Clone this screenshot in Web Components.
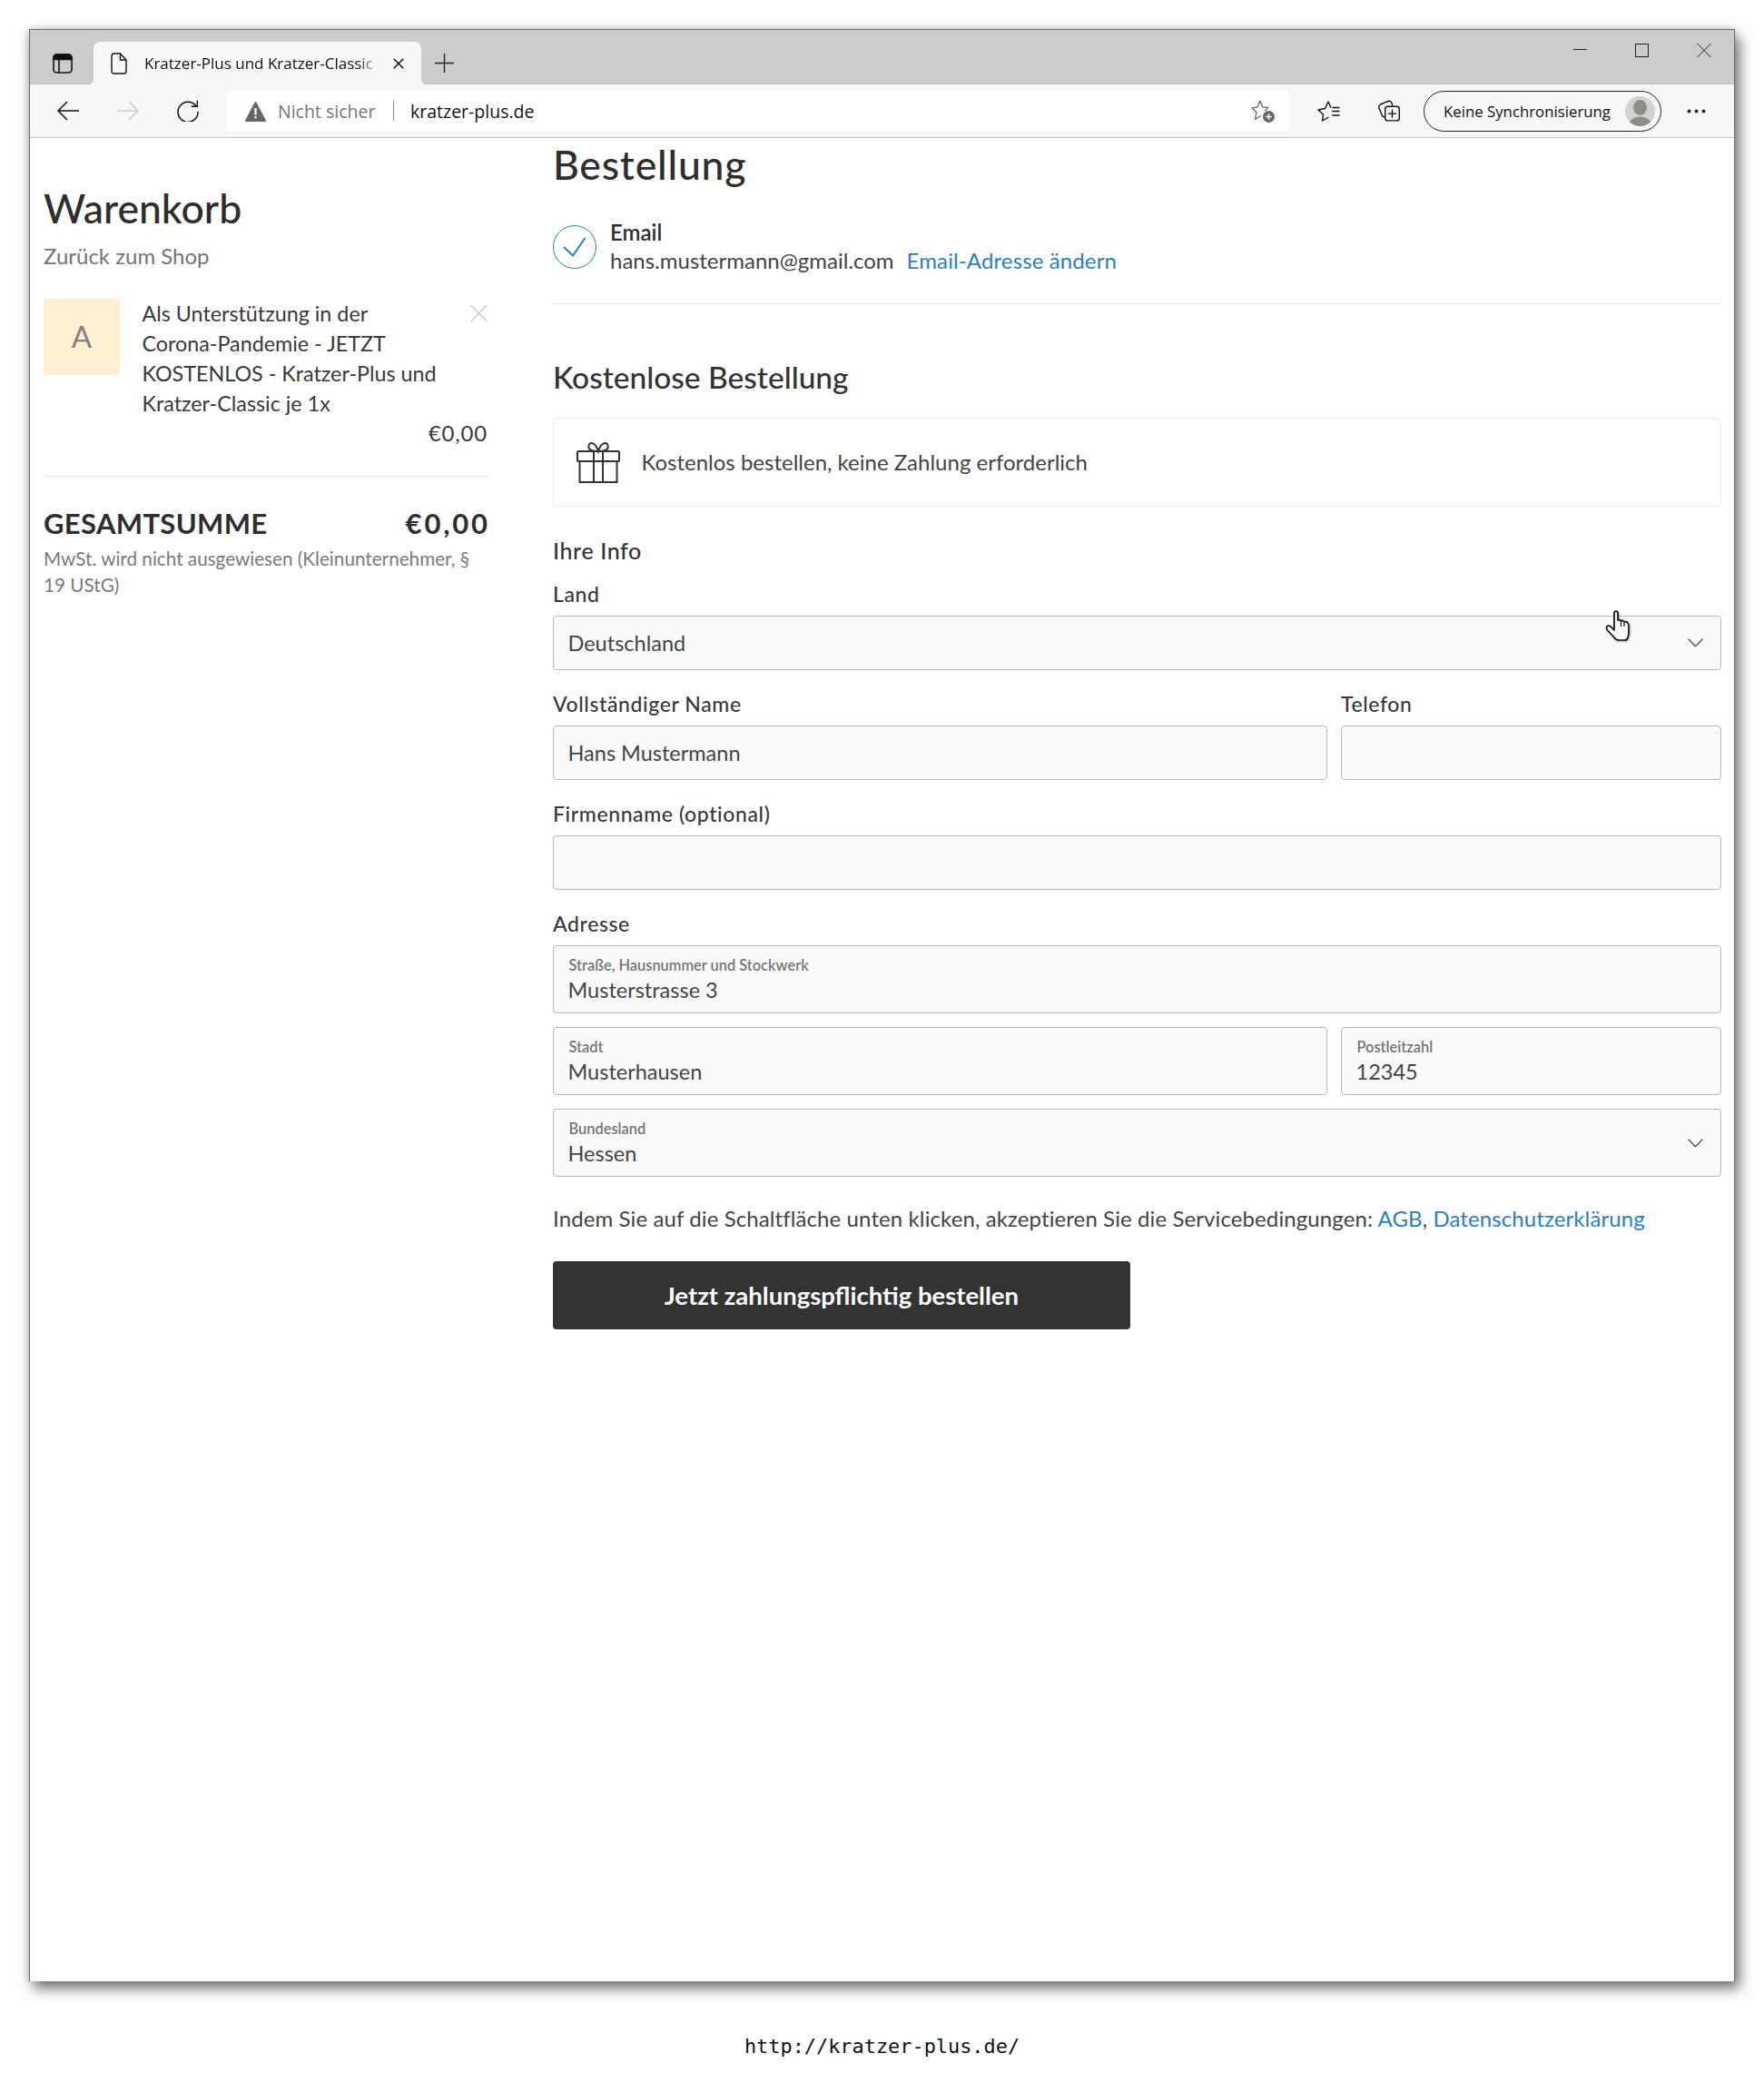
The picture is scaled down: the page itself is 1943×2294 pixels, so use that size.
<!doctype html>
<html lang="de">
<head>
<meta charset="utf-8">
<title>Kratzer-Plus</title>
<style>
  html, body { margin: 0; background: #fff; }
  body { font-family: Lato, "Liberation Sans", sans-serif; color: #333; }
</style>
</head>
<body>
<shot-page>
  <browser-window>
    <tab-strip slot="tabs" title-text="Kratzer-Plus und Kratzer-Classic"></tab-strip>
    <nav-toolbar slot="toolbar"></nav-toolbar>
    <cart-sidebar></cart-sidebar>
    <checkout-form></checkout-form>
    <hand-cursor></hand-cursor>
  </browser-window>
  <span slot="caption">http://kratzer-plus.de/</span>
</shot-page>

<script>
const shadow = (el, html) => {
  el.attachShadow({ mode: 'open' }).innerHTML = html
}

customElements.define('shot-page', class extends HTMLElement {
  constructor() {
    super()
    shadow(this, `
      <style>
        :host { display: block; padding: 32px 32px 0; height: 2262px; overflow: hidden; }
        .caption {
          margin-top: 57px; text-align: center; color: #111;
          font: 21.9px/30px "DejaVu Sans Mono", monospace;
        }
      </style>
      <slot></slot>
      <div class="caption"><slot name="caption"></slot></div>
    `)
  }
})

customElements.define('browser-window', class extends HTMLElement {
  constructor() {
    super()
    shadow(this, `
      <style>
        :host {
          display: block; width: 1877px; height: 2149px; background: #fff;
          border: 1px solid #6a6a6a; border-width: 1px 1px 0 1px;
          box-shadow: 5px 8px 14px rgba(0,0,0,.55), -2px -1px 8px rgba(0,0,0,.16);
        }
        .view {
          position: relative; display: grid; grid-template-columns: 489px 1fr;
          column-gap: 72px; padding: 0 14px 0 15px;
        }
      </style>
      <slot name="tabs"></slot>
      <slot name="toolbar"></slot>
      <div class="view"><slot></slot></div>
    `)
  }
})

customElements.define('tab-strip', class extends HTMLElement {
  constructor() {
    super()
    shadow(this, `
      <style>
        :host { display: flex; height: 60px; background: #ccc; box-shadow: inset 0 -1px 0 #c4c4c4; }
        .side { margin: 26px 0 0 25px; width: 22px; height: 22px; }
        .tab {
          position: relative; display: flex; align-items: center; margin: 13px 0 0 23px;
          width: 361px; height: 47px; box-sizing: border-box; padding: 0 19px;
          background: #f7f7f7; border-radius: 7px 7px 0 0;
        }
        .tab::before, .tab::after {
          content: ''; position: absolute; bottom: 0; width: 6px; height: 6px;
        }
        .tab::before { left: -6px; background: radial-gradient(circle at 0 0, transparent 6px, #f7f7f7 6.5px); }
        .tab::after { right: -6px; background: radial-gradient(circle at 100% 0, transparent 6px, #f7f7f7 6.5px); }
        .label {
          margin-left: 19px; width: 260px; white-space: nowrap; overflow: hidden;
          font: 17px/24px "Open Sans", sans-serif; color: #111;
          -webkit-mask-image: linear-gradient(90deg, #000 235px, transparent 260px);
          mask-image: linear-gradient(90deg, #000 235px, transparent 260px);
        }
        .close { margin-left: 14px; }
        .plus { margin: 26px 0 0 15px; }
        .win { margin-left: auto; display: flex; align-items: flex-start; padding: 15px 25px 0 0; }
        .win svg { display: block; }
        .win svg + svg { margin-left: 53px; }
        svg { flex: none; }
      </style>
      <svg class="side" viewBox="0 0 22 22" fill="none" stroke="#111" stroke-width="1.6">
        <rect x="1" y="1" width="20" height="20" rx="3.5"/>
        <path d="M1 6.5V4.5A3.5 3.5 0 0 1 4.5 1h13A3.5 3.5 0 0 1 21 4.5v2z" fill="#111"/>
        <path d="M7 7v14"/>
      </svg>
      <div class="tab">
        <svg width="18" height="24" viewBox="0 0 18 24" fill="none" stroke="#111" stroke-width="1.4" stroke-linejoin="round">
          <path d="M3.5 1H10.500L17 8V20.500A2.500 2.500 0 0 1 14.500 23H3.500A2.500 2.500 0 0 1 1 20.500V3.500A2.500 2.500 0 0 1 3.500 1z"/>
          <path d="M10.500 1V8H17"/>
        </svg>
        <div class="label">${this.getAttribute('title-text') || ''}</div>
        <svg class="close" width="12" height="12" viewBox="0 0 12 12" stroke="#111" stroke-width="1.500"><path d="M.7.7l10.600 10.600M11.300.7L.7 11.300"/></svg>
      </div>
      <svg class="plus" width="21" height="21" viewBox="0 0 21 21" stroke="#222" stroke-width="1.400"><path d="M10.500 0v21M0 10.500h21"/></svg>
      <div class="win">
        <svg width="15" height="15" viewBox="0 0 15 15" stroke="#222" stroke-width="1"><path d="M0 6.500h15"/></svg>
        <svg width="15" height="15" viewBox="0 0 15 15" fill="none" stroke="#222" stroke-width="1"><rect x=".5" y=".5" width="14" height="14"/></svg>
        <svg width="16" height="15" viewBox="0 0 16 15" stroke="#222" stroke-width="1"><path d="M.5 0l15 15M15.500 0L.5 15"/></svg>
      </div>
    `)
  }
})

customElements.define('nav-toolbar', class extends HTMLElement {
  constructor() {
    super()
    shadow(this, `
      <style>
        :host {
          display: flex; align-items: center; height: 58px; background: #f7f7f7;
          border-bottom: 1px solid #c2c2c2; padding-left: 30px;
          font-family: "Open Sans", sans-serif;
        }
        svg { flex: none; display: block; }
        .fwd { margin-left: 42px; }
        .reload { margin-left: 42px; }
        .addr {
          display: flex; align-items: center; margin-left: 30px; width: 1171px; height: 45px;
          box-sizing: border-box; padding: 0 15px 0 21px; background: #fff; border-radius: 5px;
          font-size: 19.500px;
        }
        .warn { margin-right: 13px; }
        .unsafe { color: #767676; width: 109px; white-space: nowrap; }
        .sep { margin: 0 18px; width: 1px; height: 22px; background: #8a8a8a; }
        .host { color: #111; white-space: nowrap; }
        .star { margin-left: auto; }
        .fav { margin-left: 31px; }
        .coll { margin-left: 41px; }
        .pill {
          display: flex; align-items: center; margin-left: 26px; width: 262px; height: 45px;
          box-sizing: border-box; border: 1.500px solid #222; border-radius: 23px;
          padding: 0 6px 0 21px; font-size: 16.800px; color: #111; white-space: nowrap;
        }
        .avatar { margin-left: auto; }
        .dots { margin-left: 28px; }
      </style>
      <svg width="24" height="22" viewBox="0 0 24 22" fill="none" stroke="#111" stroke-width="1.500"><path d="M24 11H1M11 1L1 11l10 10"/></svg>
      <svg class="fwd" width="24" height="22" viewBox="0 0 24 22" fill="none" stroke="#ccc" stroke-width="1.500"><path d="M0 11h23M13 1l10 10-10 10"/></svg>
      <svg class="reload" width="24" height="24" viewBox="0 0 24 24" fill="none" stroke="#111" stroke-width="1.500"><path d="M21 7A11 11 0 1 0 23 13"/><path d="M22.300 .8V7.300H15.800"/></svg>
      <div class="addr">
        <svg class="warn" width="23" height="23" viewBox="0 0 23 23">
          <path fill="#666" stroke="#666" stroke-width="2" stroke-linejoin="round" d="M11.500 2L22 22H1z"/>
          <path fill="#fff" d="M10.400 8h2.200v7.500h-2.200zM10.400 17h2.200v2.300h-2.200z"/>
        </svg>
        <span class="unsafe">Nicht sicher</span>
        <span class="sep"></span>
        <span class="host">kratzer-plus.de</span>
        <svg class="star" width="27" height="25" viewBox="0 0 27 25" fill="none" stroke="#666" stroke-width="1.300" stroke-linejoin="round">
          <path d="M11 17.500L4.500 21.500L6 13.800L1 8.800L7.200 7.800L9.800 1L12.600 7.800L18.800 8.400L15.200 12"/>
          <circle cx="19.500" cy="18.500" r="6.500" fill="#666" stroke="none"/>
          <path d="M19.500 15.200v6.600M16.200 18.500h6.600" stroke="#fff" stroke-width="1.500"/>
        </svg>
      </div>
      <svg class="fav" width="25" height="23" viewBox="0 0 25 23" fill="none" stroke="#111" stroke-width="1.400" stroke-linejoin="round">
        <path d="M15 7.500L12 1L8.500 8.500L1 10L6.500 15L5.500 22L12.500 18"/>
        <path d="M16.300 7.500h8.200M16.300 11.500h8.200M16.300 16h8.200" stroke-width="1.300"/>
      </svg>
      <svg class="coll" width="25" height="24" viewBox="0 0 25 24" fill="none" stroke="#111" stroke-width="1.400">
        <path d="M8.500 19A4 4 0 0 1 5.500 17.500L2 9A3.500 3.500 0 0 1 3.500 5L12 1.500A3 3 0 0 1 15.500 2.500L17 6.500"/>
        <rect x="8.700" y="7.300" width="15.600" height="15.600" rx="3"/>
        <path d="M16.500 10.500v9.200M11.900 15.100h9.200"/>
      </svg>
      <div class="pill">
        <span>Keine Synchronisierung</span>
        <svg class="avatar" width="33" height="33" viewBox="0 0 33 33">
          <clipPath id="c"><circle cx="16.500" cy="16.500" r="16.500"/></clipPath>
          <circle cx="16.500" cy="16.500" r="16.500" fill="#d3d2cc"/>
          <g clip-path="url(#c)" fill="#8f8c88">
            <ellipse cx="16.500" cy="12.500" rx="7.500" ry="8.500"/>
            <ellipse cx="16.500" cy="31" rx="12" ry="8.500"/>
          </g>
        </svg>
      </div>
      <svg class="dots" width="21" height="5" viewBox="0 0 21 5" fill="#222"><circle cx="2.500" cy="2.500" r="2"/><circle cx="10.500" cy="2.500" r="2"/><circle cx="18.500" cy="2.500" r="2"/></svg>
    `)
  }
})

customElements.define('cart-sidebar', class extends HTMLElement {
  constructor() {
    super()
    shadow(this, `
      <style>
        :host { display: block; padding-top: 50px; color: #333; font-family: Lato, sans-serif; }
        h1 { margin: 0; font: 500 44.500px/54px Lato, sans-serif; color: #2e2e2e; }
        .back { margin-top: 11px; font-size: 24px; line-height: 30px; color: #757575; }
        .item { display: flex; margin-top: 31px; }
        .thumb {
          flex: none; display: flex; align-items: center; justify-content: center;
          width: 84px; height: 82px; padding-bottom: 2px; margin-top: 1px; background: #fff0d3;
          font-size: 33px; color: #808080;
        }
        .desc { margin: 1px 0 -1px 24.500px; font-size: 23.300px; line-height: 33px; color: #3a3a3a; white-space: nowrap; }
        .x { margin: 8px 0 0 auto; flex: none; }
        .price { font-size: 24px; line-height: 33px; text-align: right; color: #3a3a3a; letter-spacing: .8px; }
        hr { margin: 31px 0 32px; border: 0; border-top: 1px solid #e6e6e6; }
        .total {
          display: flex; justify-content: space-between;
          font: 700 31px/38px Lato, sans-serif; color: #2e2e2e; letter-spacing: .35px;
        }
        .sum { letter-spacing: 2.800px; margin-right: -2.800px; }
        .tax { margin-top: 6px; font-size: 20.700px; line-height: 29px; color: #7a7a7a; white-space: nowrap; }
      </style>
      <h1>Warenkorb</h1>
      <div class="back">Zurück zum Shop</div>
      <div class="item">
        <div class="thumb">A</div>
        <div class="desc">Als Unterstützung in der<br>Corona-Pandemie - JETZT<br>KOSTENLOS - Kratzer-Plus und<br>Kratzer-Classic je 1x</div>
        <svg class="x" width="19" height="18" viewBox="0 0 19 18" stroke="#c8c8c8" stroke-width="1.300"><path d="M.5 0l18 18M18.500 0L.5 18"/></svg>
      </div>
      <div class="price">€0,00</div>
      <hr>
      <div class="total"><span>GESAMTSUMME</span><span class="sum">€0,00</span></div>
      <div class="tax">MwSt. wird nicht ausgewiesen (Kleinunternehmer, §<br>19 UStG)</div>
    `)
  }
})

customElements.define('form-field', class extends HTMLElement {
  constructor() {
    super()
    const label = this.getAttribute('label')
    const hint = this.getAttribute('hint')
    const value = this.getAttribute('value') || ''
    const chevron = this.hasAttribute('select')
      ? '<svg class="chev" width="17" height="10" viewBox="0 0 17 10" fill="none" stroke="#555" stroke-width="1.500"><path d="M.7.7l7.800 8 7.800-8"/></svg>'
      : ''
    shadow(this, `
      <style>
        :host { display: block; min-width: 0; }
        .label { margin-bottom: 9px; font-size: 23px; font-weight: 500; line-height: 30px; color: #383838; letter-spacing: .6px; }
        .box {
          position: relative; display: flex; flex-direction: column; justify-content: center;
          height: ${hint ? 75 : 60}px; box-sizing: border-box; padding: 0 15.500px;
          background: #fafafa; border: 1px solid #adbccc; border-radius: 4px;
        }
        .hint { margin: 0 0 3px 1px; font-size: 16.400px; font-weight: 600; line-height: 20px; color: #757575; white-space: nowrap; }
        .value { font-size: 23.500px; line-height: 28px; color: #444; white-space: nowrap; min-height: 28px; }
        .chev { position: absolute; right: 19px; top: 50%; margin-top: -5px; }
      </style>
      ${label ? `<div class="label">${label}</div>` : ''}
      <div class="box">
        ${hint ? `<div class="hint">${hint}</div>` : ''}
        <div class="value">${value}</div>
        ${chevron}
      </div>
    `)
  }
})

customElements.define('checkout-form', class extends HTMLElement {
  constructor() {
    super()
    shadow(this, `
      <style>
        :host { display: block; padding-top: 2px; color: #333; font-family: Lato, sans-serif; min-width: 0; }
        h1 { margin: 0; font: 500 44.500px/54px Lato, sans-serif; color: #2e2e2e; letter-spacing: .8px; }
        a { color: #2a7ec8; text-decoration: none; }
        .email { display: flex; margin-top: 31px; }
        .email svg { flex: none; margin: 9px 15px 0 0; }
        .email b { display: block; padding-top: 1px; font-size: 24px; font-weight: 600; line-height: 31px; color: #2e2e2e; }
        .addr { display: flex; gap: 14px; font-size: 24px; line-height: 32px; color: #444; }
        .addr a { letter-spacing: .12px; }
        hr { margin: 31px 0 60px; border: 0; border-top: 1px solid #e8e8e8; }
        h2 { margin: 0; font: 500 33.500px/40px Lato, sans-serif; color: #333; }
        .free {
          display: flex; align-items: center; gap: 23.500px; margin-top: 25px; height: 98px;
          box-sizing: border-box; padding-left: 25px; border: 1px solid #ececec; border-radius: 4px;
          font-size: 24px; line-height: 32px; color: #444;
        }
        h3 { margin: 33px 0 18px; font: 500 25px/30px Lato, sans-serif; color: #333; letter-spacing: .6px; }
        .fields { display: flex; flex-direction: column; gap: 22px; }
        .two { display: grid; grid-template-columns: 853px 1fr; column-gap: 15px; }
        .address { display: flex; flex-direction: column; gap: 15px; }
        .terms { margin-top: 30px; font-size: 24px; line-height: 32px; color: #444; white-space: nowrap; letter-spacing: .1px; }
        button {
          display: block; margin-top: 31px; width: 636px; height: 75px; padding: 0;
          border: 0; border-radius: 4px; background: #333; color: #fff;
          font: 700 27.500px Lato, sans-serif;
        }
      </style>
      <h1>Bestellung</h1>
      <div class="email">
        <svg width="48" height="48" viewBox="0 0 48 48" fill="none" stroke="#2a7ec8">
          <circle cx="24" cy="24" r="23.500"/>
          <path d="M12 24l10 9.500L35.500 14" stroke-width="2"/>
        </svg>
        <div>
          <b>Email</b>
          <div class="addr"><span>hans.mustermann@gmail.com</span><a>Email-Adresse ändern</a></div>
        </div>
      </div>
      <hr>
      <h2>Kostenlose Bestellung</h2>
      <div class="free">
        <svg width="48" height="46" viewBox="0 0 48 46" fill="none" stroke="#333" stroke-width="2">
          <rect x="1" y="11" width="46" height="11" rx="1"/>
          <rect x="3.500" y="22" width="41" height="23"/>
          <path d="M19 11v34M29 11v34"/>
          <path d="M24 11C18 11 12 9.500 13.500 4.500C15 0 21 1 24 11C27 1 33 0 34.500 4.500C36 9.500 30 11 24 11z"/>
        </svg>
        <span>Kostenlos bestellen, keine Zahlung erforderlich</span>
      </div>
      <h3>Ihre Info</h3>
      <div class="fields">
        <form-field label="Land" value="Deutschland" select></form-field>
        <div class="two">
          <form-field label="Vollständiger Name" value="Hans Mustermann"></form-field>
          <form-field label="Telefon"></form-field>
        </div>
        <form-field label="Firmenname (optional)"></form-field>
        <div class="address">
          <form-field label="Adresse" hint="Straße, Hausnummer und Stockwerk" value="Musterstrasse 3"></form-field>
          <div class="two">
            <form-field hint="Stadt" value="Musterhausen"></form-field>
            <form-field hint="Postleitzahl" value="12345"></form-field>
          </div>
          <form-field hint="Bundesland" value="Hessen" select></form-field>
        </div>
      </div>
      <div class="terms">Indem Sie auf die Schaltfläche unten klicken, akzeptieren Sie die Servicebedingungen: <a>AGB</a>, <a>Datenschutzerklärung</a></div>
      <button>Jetzt zahlungspflichtig bestellen</button>
    `)
  }
})

customElements.define('hand-cursor', class extends HTMLElement {
  constructor() {
    super()
    shadow(this, `
      <style>
        :host { position: absolute; left: 1735px; top: 520px; width: 27px; height: 34px; }
        svg { display: block; filter: drop-shadow(1px 1px 1px rgba(0,0,0,.35)); }
      </style>
      <svg width="27" height="34" viewBox="0 0 27 34" fill="#fff" stroke="#111" stroke-width="1.700" stroke-linejoin="round">
        <path d="M10 3.500Q10 1 12 1Q14 1 14 3.500V11Q16.500 10 17.500 12Q19.500 10.500 21 13Q23.500 11.500 25 14.500Q26 15 26 18V24Q26 28 24.500 31Q24 33 21 33H15Q12 33 10 30L2.500 22Q0.500 19 2.500 17.500Q5 16.500 7 19L10 22z"/>
        <path d="M17.500 12V18M21 13V18" stroke-width="1.200"/>
      </svg>
    `)
  }
})
</script>
</body>
</html>
